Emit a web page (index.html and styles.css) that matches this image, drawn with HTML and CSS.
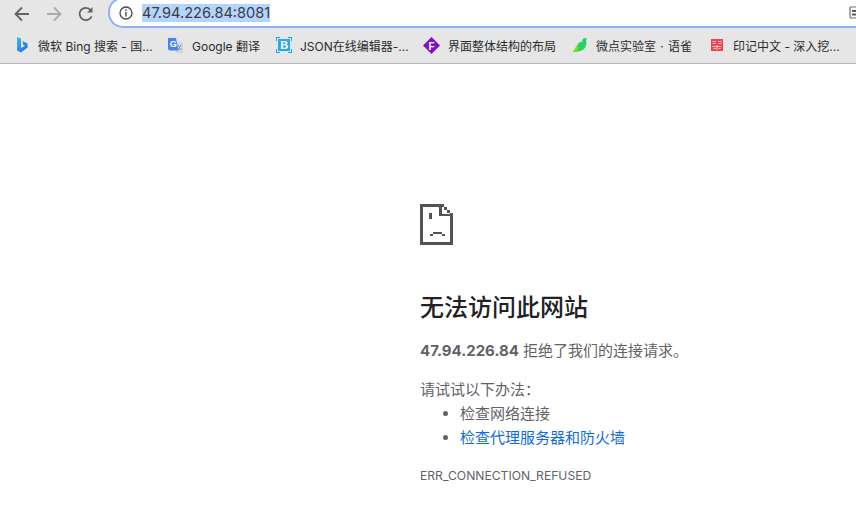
FILE: index.html
```html
<!DOCTYPE html>
<html lang="zh-CN">
<head>
<meta charset="utf-8">
<title>47.94.226.84</title>
<link rel="stylesheet" href="styles.css">
</head>
<body>
<header class="chrome">
  <div class="toolbar">
    <svg class="nav" width="20" height="20" viewBox="0 0 20 20"><path d="M17 10H4M10 3.500 3.500 10l6.500 6.500" fill="none" stroke="#5f6367" stroke-width="1.800"/></svg>
    <svg class="nav" width="20" height="20" viewBox="0 0 20 20"><path d="M3 10h13M10 3.500 16.500 10 10 16.500" fill="none" stroke="#a8a9ab" stroke-width="1.800"/></svg>
    <svg class="nav" width="20" height="20" viewBox="0 0 20 20"><path d="M15.600 12.300a6.200 6.200 0 1 1-1-6.300" fill="none" stroke="#5f6367" stroke-width="1.800"/><path d="M16.500 3v5.500H11z" fill="#5f6367"/></svg>
    <div class="omnibox">
      <svg class="info" width="14" height="14" viewBox="0 0 14 14"><circle cx="7" cy="7" r="6" fill="none" stroke="#45484b" stroke-width="1.300"/><rect x="6.300" y="6" width="1.400" height="4.500" fill="#45484b"/><rect x="6.300" y="3.500" width="1.400" height="1.500" fill="#45484b"/></svg>
      <span class="url">47.94.226.84:8081</span>
      <svg class="ext" width="7" height="16" viewBox="0 0 7 16"><rect x="1" y="2" width="10" height="11" rx="1" fill="none" stroke="#6a6c6f" stroke-width="1.200"/><rect x="3" y="5" width="4" height="2" fill="#55585b"/><rect x="3" y="8.500" width="4" height="2" fill="#55585b"/></svg>
    </div>
  </div>
  <nav class="bookmarks">
    <a class="bm bm-1">
      <svg width="16" height="18" viewBox="0 0 16 18"><defs><linearGradient id="bing" x1="0" y1="0" x2="1" y2="1"><stop offset="0" stop-color="#37bdf0"/><stop offset="1" stop-color="#2563d8"/></linearGradient></defs><path d="M1 1l4 1.500V12l4-2-2-1.500L6.500 5l5 2.500v4L5 16.500 1 14.500z" fill="url(#bing)"/></svg>
      <span>微软 Bing 搜索 - 国...</span>
    </a>
    <a class="bm bm-2">
      <svg width="17" height="17" viewBox="0 0 17 17"><path d="M7 5h9v11H9z" fill="#d4d4d6"/><path d="M11 8l3 5M14 8l-3 5" stroke="#8a9099" fill="none"/><path d="M1 1h8l2.500 12.500H3a2 2 0 0 1-2-2z" fill="#4a82ee"/><text x="2.800" y="10" class="icon-g">G</text></svg>
      <span>Google 翻译</span>
    </a>
    <a class="bm bm-3">
      <svg width="16" height="16" viewBox="0 0 16 16"><path d="M0 4V0h4M12 0h4v4M16 12v4h-4M4 16H0v-4" fill="none" stroke="#18a4ee" stroke-width="2"/><rect x="2" y="2" width="12" height="12" fill="#2aa5f0"/><text x="4.200" y="12" class="icon-b">B</text></svg>
      <span>JSON在线编辑器-...</span>
    </a>
    <a class="bm bm-4">
      <svg width="17" height="17" viewBox="0 0 17 17"><path d="M8.500 0 17 8.500 8.500 17 0 8.500z" fill="#7a12c8"/><text x="5.500" y="12.500" class="icon-f">F</text></svg>
      <span>界面整体结构的布局</span>
    </a>
    <a class="bm bm-5">
      <svg width="16" height="16" viewBox="0 0 16 16"><path d="M1 15 6 7c1-2 3-2 4-2 0-2 1-4 3-4 1 0 2 1 2 1l-1 1c1 3 0 7-2 9-2 2-6 3-11 3z" fill="#25d262"/><path d="M1 15 6 7c0 3 0 6-1 8z" fill="#7fe020"/></svg>
      <span>微点实验室<span class="dot">·</span>语雀</span>
    </a>
    <a class="bm bm-6">
      <svg width="12" height="12" viewBox="0 0 12 12"><rect width="12" height="12" fill="#f0424c"/><path d="M1.500 2h3.500v1H1.500zM7 2h3.500v1H7zM1.500 4h3.500v1H1.500zM7 4h3.500v1H7zM1.500 7h9v1h-9zM5.500 6h1v5h-1zM2.500 9h2v1h-2zM7.500 9h2v1h-2z" fill="#fbc8cb"/></svg>
      <span>印记中文 - 深入挖...</span>
    </a>
  </nav>
</header>
<main class="page">
  <div class="content">
    <svg class="sad" width="33" height="41" viewBox="0 0 33 41" shape-rendering="crispEdges"><path d="M0 0h24v3h3v3h3v3h3v32H0zM3 3v35h27V12H19V3z" fill="#535353" fill-rule="evenodd"/><path d="M22 3h2v3h3v3h3v1h-8z" fill="#fff"/><path d="M9 9h3v6H9zM10 30h3v2h-3zM13 28h9v2h-9zM22 30h3v2h-3z" fill="#535353"/></svg>
    <h1>无法访问此网站</h1>
    <p class="summary"><strong>47.94.226.84</strong> 拒绝了我们的连接请求。</p>
    <p class="try">请试试以下办法：</p>
    <ul>
      <li>检查网络连接</li>
      <li><a>检查代理服务器和防火墙</a></li>
    </ul>
    <div class="code">ERR_CONNECTION_REFUSED</div>
  </div>
</main>
</body>
</html>
```
FILE: styles.css
```css
* { box-sizing: border-box; }
html, body { margin: 0; height: 100%; }
body {
  width: 856px;
  height: 514px;
  overflow: hidden;
  background: #fff;
  font-family: Inter, "Liberation Sans", "Noto Sans CJK SC", sans-serif;
}
.chrome {
  height: 64px;
  background: #e6e6e6;
  border-bottom: 1px solid #b6b6b6;
}
.toolbar {
  height: 27px;
  display: flex;
  align-items: center;
  padding-left: 12px;
  gap: 12px;
}
.nav { flex: none; margin-top: 1px; }
.omnibox {
  flex: none;
  width: 748px;
  height: 31px;
  align-self: flex-end;
  margin-bottom: -1px;
  background: #fff;
  border: 2px solid #8fb1f0;
  border-right: none;
  border-radius: 15px 0 0 15px;
  display: flex;
  align-items: center;
  padding-left: 9px;
  gap: 9px;
}
.info { flex: none; }
.url {
  font-size: 14.600px;
  line-height: 18px;
  color: #3b3d40;
  background: #b3d4fd;
}
.ext { flex: none; margin-left: auto; }
.bookmarks {
  height: 36px;
  display: flex;
  align-items: center;
}
.bm {
  display: flex;
  align-items: center;
  flex: none;
  font-size: 12px;
  color: #2a2b2d;
  white-space: nowrap;
}
.bm-1 { margin-left: 16px; gap: 6px; width: 151px; }
.bm-2 { gap: 8px; width: 109px; }
.bm-3 { gap: 8px; width: 147px; }
.bm-4 { gap: 8px; width: 149px; }
.bm-5 { gap: 8px; width: 139px; }
.bm-6 { gap: 10px; }
.dot { display: inline-block; width: 12px; text-align: center; }
.icon-g { font: bold 9px "Liberation Sans", sans-serif; fill: #fff; }
.icon-b { font: bold 11px "Liberation Sans", sans-serif; fill: #fff; }
.icon-f { font: bold 10px "Liberation Sans", sans-serif; fill: #fff; }
.page { padding: 140px 0 0 420px; }
.content { width: 420px; }
.sad { display: block; }
h1 {
  margin: 47px 0 0;
  font-size: 24px;
  line-height: 32px;
  font-weight: 500;
  color: #202124;
}
.summary {
  margin: 15px 0 0;
  font-size: 15px;
  line-height: 24px;
  color: #5f6368;
}
.try {
  margin: 15px 0 0;
  font-size: 15px;
  line-height: 24px;
  color: #5f6368;
}
ul {
  margin: 0;
  padding-left: 40px;
  font-size: 15px;
  line-height: 24px;
  color: #5f6368;
}
a { color: inherit; }
li a { color: #0f6be0; }
.code {
  margin-top: 18px;
  font-size: 12.150px;
  line-height: 16px;
  color: #5f6368;
}
```
